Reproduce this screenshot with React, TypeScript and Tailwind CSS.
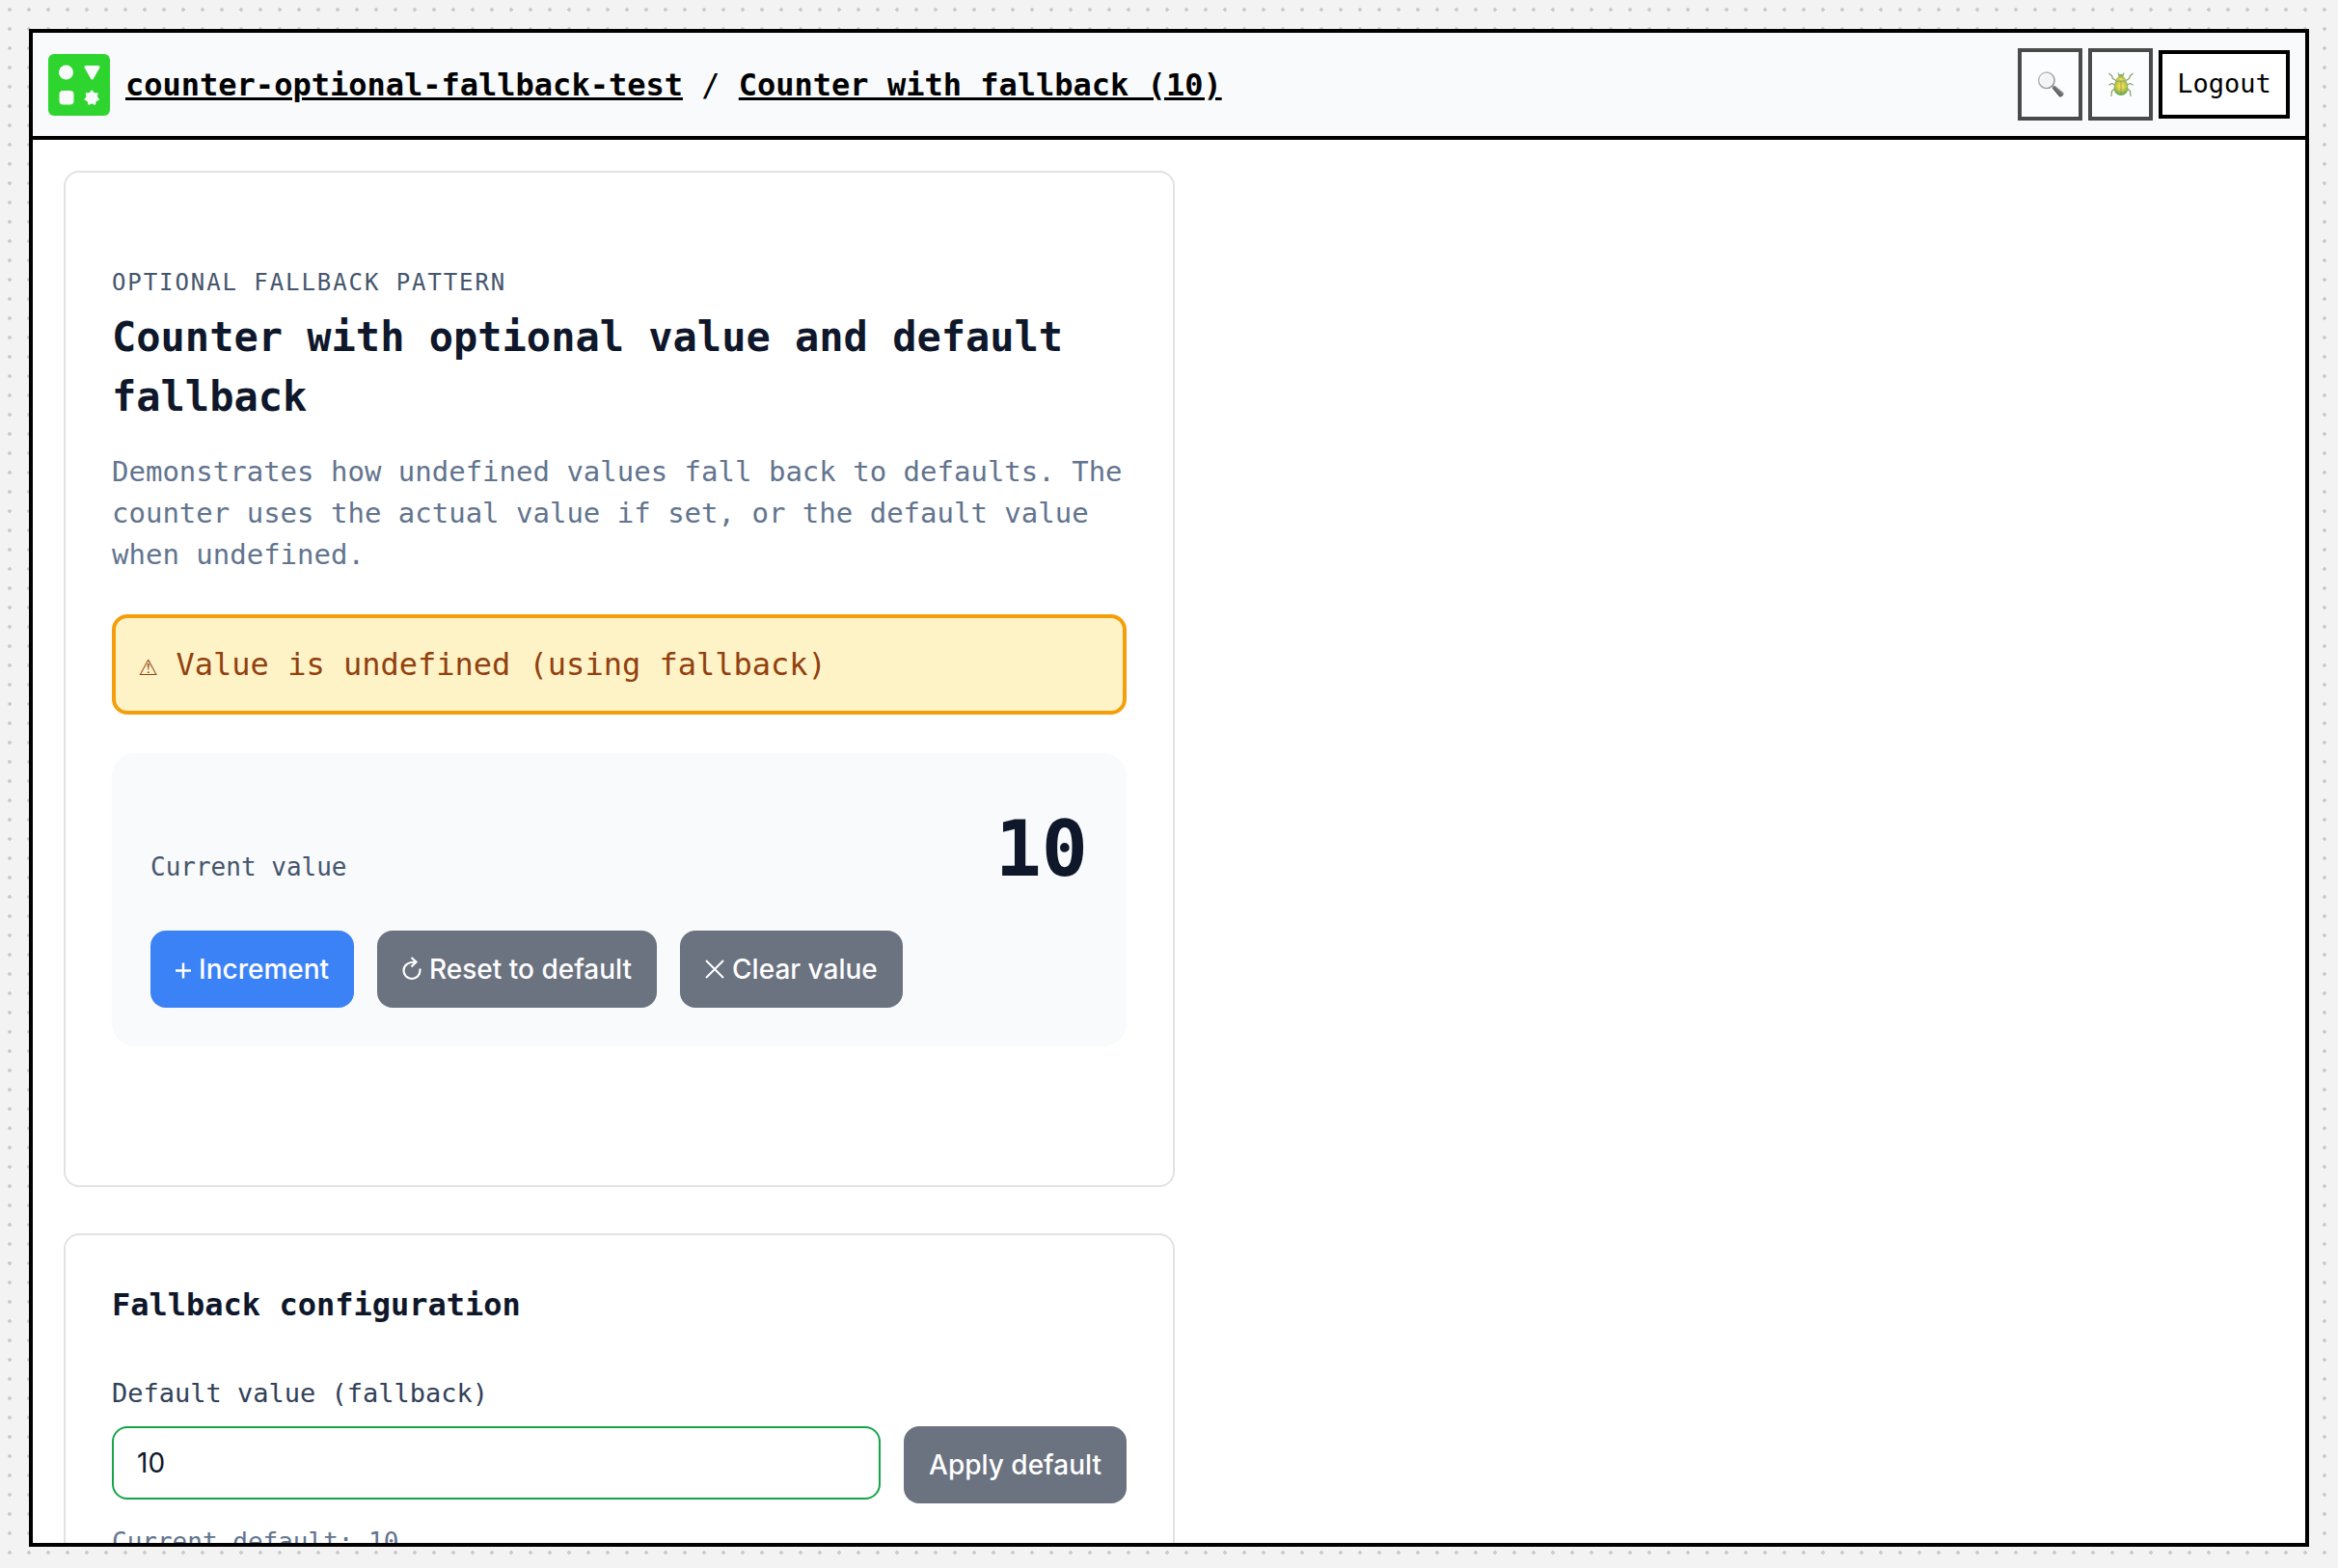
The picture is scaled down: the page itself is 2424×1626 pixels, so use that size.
import { useState } from "react";
import type { ReactNode } from "react";

// Seven-pointed star centred in the logo's lower right quarter.
const starPoints = Array.from({ length: 14 }, (_, i) => {
  const radius = i % 2 === 0 ? 7.2 : 5;
  const angle = (Math.PI * i) / 7;
  return `${45.2 + radius * Math.sin(angle)},${45.5 - radius * Math.cos(angle)}`;
}).join(" ");

function Logo() {
  return (
    <svg viewBox="0 0 64 64" className="size-16 shrink-0" aria-hidden="true">
      <rect width="64" height="64" rx="6" fill="#2fd52f" />
      <g fill="#f9fafc" stroke="#f9fafc" strokeLinejoin="round">
        <circle cx="18.500" cy="19" r="7.500" stroke="none" />
        <path d="M39 13.500H52L45.500 25Z" strokeWidth="3" />
        <rect x="11.500" y="38" width="15" height="14.500" rx="4" stroke="none" />
        <polygon points={starPoints} strokeWidth="1.500" />
      </g>
    </svg>
  );
}

function MagnifierIcon() {
  return (
    <svg viewBox="0 0 28 28" className="size-7" aria-hidden="true">
      <defs>
        <linearGradient id="handle" x1="0" y1="1" x2="1" y2="0">
          <stop offset="0.2" stopColor="#000" />
          <stop offset="0.55" stopColor="#3c3c3c" />
          <stop offset="0.8" stopColor="#999" />
        </linearGradient>
        <linearGradient id="rim" x1="0" y1="0" x2="1" y2="1">
          <stop offset="0" stopColor="#a9b9c9" />
          <stop offset="1" stopColor="#55585c" />
        </linearGradient>
      </defs>
      <path d="M15.500 14.500l3 3" stroke="#777" strokeWidth="2" />
      <path d="M16.500 17.500l2-2 8.300 7q.8 1-.6 2.400t-2.600 1z" fill="url(#handle)" stroke="url(#handle)" strokeWidth="1.200" />
      <circle cx="9.800" cy="9.300" r="8.200" fill="#f1f2f3" stroke="url(#rim)" strokeWidth="1.600" />
      <circle cx="9.800" cy="9.300" r="6.700" fill="none" stroke="#fff" strokeWidth="1" />
    </svg>
  );
}

function BeetleIcon() {
  return (
    <svg viewBox="0 0 28 28" className="size-7" aria-hidden="true">
      <defs>
        <radialGradient id="shell" cx="0.5" cy="0.35" r="0.6">
          <stop offset="0" stopColor="#ffe100" />
          <stop offset="0.45" stopColor="#c9bd00" />
          <stop offset="1" stopColor="#2b8210" />
        </radialGradient>
        <radialGradient id="thorax" cx="0.5" cy="0.6" r="0.6">
          <stop offset="0" stopColor="#ffd800" />
          <stop offset="1" stopColor="#5f9410" />
        </radialGradient>
      </defs>
      <g fill="none" stroke="#56782c" strokeWidth="1.200" strokeLinecap="round" strokeLinejoin="round">
        <path d="M9 9.500L5.500 7.500 4.500 4.500 1.800 2.500M19 9.500l3.500-2 1-3 2.700-2" />
        <path d="M7.500 14L4.500 12.500 1.800 14M20.500 14l3-1.500L26.200 14" />
        <path d="M7.500 18L4.500 20.500 4 25.500M20.500 18l3 2.500.5 5M12 3.500L11 2M16 3.500L17 2" />
      </g>
      <ellipse cx="14" cy="4.600" rx="2.800" ry="1.800" fill="#5d9416" />
      <path d="M9 10c0-3.500 2.200-5 5-5s5 1.500 5 5c-3 1-7 1-10 0z" fill="url(#thorax)" />
      <path d="M8 11c4-1.300 8-1.300 12 0 2.500 5 2.200 13.500-6 14-8.200-.5-8.500-9-6-14z" fill="url(#shell)" />
      <path d="M14 10.500v14M8.500 10.700c3.500-1 7.500-1 11 0" fill="none" stroke="#5a7c12" strokeWidth="0.900" />
    </svg>
  );
}

function IconButton({ label, children }: { label: string; children: ReactNode }) {
  return (
    <button
      type="button"
      aria-label={label}
      className="flex h-[75px] w-[67px] items-center justify-center border-4 border-black bg-white opacity-70"
    >
      {children}
    </button>
  );
}

function ActionButton({
  tone = "gray",
  onClick,
  children,
}: {
  tone?: "gray" | "blue";
  onClick?: () => void;
  children: ReactNode;
}) {
  return (
    <button
      type="button"
      onClick={onClick}
      className={`flex h-20 shrink-0 items-center justify-center gap-2 rounded-2xl px-[26px] font-['Inter',sans-serif] text-[28px] font-medium text-white ${
        tone === "blue" ? "bg-[#3b82f6]" : "bg-[#6b7280]"
      }`}
    >
      {children}
    </button>
  );
}

function PlusIcon() {
  return (
    <svg viewBox="0 0 16 20" className="h-5 w-4" fill="none" stroke="currentColor" strokeWidth="2.500" aria-hidden="true">
      <path d="M0 11.500h16M8 3.500v16" />
    </svg>
  );
}

function ResetIcon() {
  return (
    <svg viewBox="0 0 20 26" className="h-[26px] w-5" fill="none" stroke="currentColor" strokeWidth="2.200" aria-hidden="true">
      <path d="M14.500 5.500C6 5.500 1.500 9 1.500 14.500a8.500 8.500 0 0 0 17 0V12.500M9.500 1l5 4.500-5 5" />
    </svg>
  );
}

function ClearIcon() {
  return (
    <svg viewBox="0 0 20 20" className="size-5" fill="none" stroke="currentColor" strokeWidth="2" aria-hidden="true">
      <path d="M1 1l18 18M19 1L1 19" />
    </svg>
  );
}

export default function App() {
  const [value, setValue] = useState<number | undefined>(undefined);
  const [fallback, setFallback] = useState(10);
  const [draft, setDraft] = useState("10");
  const current = value ?? fallback;

  return (
    <div className="flex h-screen bg-[#f3f3f3] bg-[radial-gradient(circle,#cccccc_2px,transparent_2px)] bg-[size:20px_20px] px-[30px] pt-[30px] pb-[22px] font-['DejaVu_Sans_Mono',monospace]">
      <div className="flex min-w-0 flex-1 flex-col border-4 border-black bg-white">
        <header className="flex h-[111px] shrink-0 items-center gap-4 border-b-4 border-black bg-slate-50 px-4">
          <Logo />
          <nav className="flex-1 text-[32px] leading-[48px] text-black">
            <a href="#space" className="font-bold underline">counter-optional-fallback-test</a>
            {" / "}
            <a href="#counter" className="font-bold underline">{`Counter with fallback (${current})`}</a>
          </nav>
          <div className="flex items-center gap-1.5">
            <IconButton label="Search"><MagnifierIcon /></IconButton>
            <IconButton label="Debug"><BeetleIcon /></IconButton>
            <button type="button" className="h-[71px] w-[136px] border-4 border-black bg-white text-[27px] text-black">
              Logout
            </button>
          </div>
        </header>

        <main className="flex min-h-0 flex-1 flex-col gap-12 overflow-hidden p-8">
          <section className="w-full max-w-[1152px] shrink-0 rounded-2xl border-2 border-[#e2e2e2] px-12 pt-24 pb-36">
            <p className="text-2xl leading-9 tracking-[0.08em] text-slate-600 uppercase">Optional fallback pattern</p>
            <h1 className="mt-2 text-[42px] leading-[62px] font-bold text-slate-900">
              Counter with optional value and default fallback
            </h1>
            <p className="mt-[25px] text-[29px] leading-[43px] text-slate-500">
              Demonstrates how undefined values fall back to defaults. The counter uses the actual value if set, or the
              default value when undefined.
            </p>
            <div
              role="status"
              className="mt-10 rounded-2xl border-4 border-[#f59e0b] bg-[#fef3c7] p-6 text-[32px] leading-[48px] text-[#92400e]"
            >
              {value === undefined ? "⚠ Value is undefined (using fallback)" : "✓ Value is set"}
            </div>
            <div className="mt-10 rounded-3xl bg-slate-50 p-10">
              <div className="flex items-baseline justify-between">
                <span className="text-[26px] text-slate-600">Current value</span>
                <span className="text-[80px] leading-[120px] font-bold text-slate-900">{current}</span>
              </div>
              <div className="mt-6 flex gap-6">
                <ActionButton tone="blue" onClick={() => setValue(current + 1)}><PlusIcon />Increment</ActionButton>
                <ActionButton onClick={() => setValue(fallback)}><ResetIcon />Reset to default</ActionButton>
                <ActionButton onClick={() => setValue(undefined)}><ClearIcon />Clear value</ActionButton>
              </div>
            </div>
          </section>

          <section className="w-full max-w-[1152px] shrink-0 rounded-2xl border-2 border-[#e2e2e2] p-12">
            <h2 className="text-[32px] leading-[48px] font-bold text-slate-900">Fallback configuration</h2>
            <label htmlFor="default-value" className="mt-12 block text-[27px] leading-10 text-slate-700">
              Default value (fallback)
            </label>
            <div className="mt-3.5 flex items-start gap-6">
              <div className="flex min-w-0 flex-1 flex-col gap-6">
                <input
                  id="default-value"
                  value={draft}
                  onChange={(event) => setDraft(event.target.value)}
                  className="h-[76px] w-full rounded-2xl border-2 border-[#16a34a] bg-white px-6 font-['Inter',sans-serif] text-[28px] text-slate-900 outline-none"
                />
                <p className="text-[26px] leading-10 text-slate-500">{`Current default: ${fallback}`}</p>
              </div>
              <ActionButton onClick={() => setFallback(Number(draft) || 0)}>Apply default</ActionButton>
            </div>
          </section>
        </main>
      </div>
    </div>
  );
}
